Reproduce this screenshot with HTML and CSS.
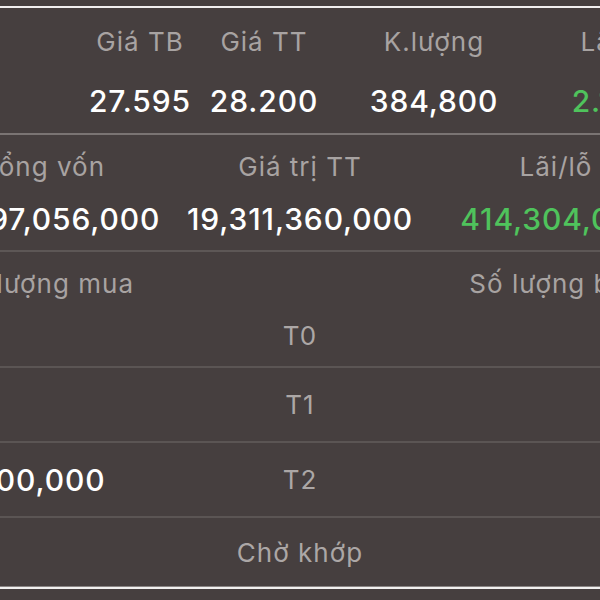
FILE: index.html
```html
<!DOCTYPE html>
<html lang="vi">
<head>
    <meta charset="UTF-8">
    <title>Danh mục - Chi tiết</title>
    <link rel="stylesheet" href="styles.css">
</head>
<body>

<div class="top_rule"></div>

<!-- ===== QUOTE SUMMARY ===== -->
<div class="quote_table">
    <span class="label">Giá TB</span>
    <span class="label">Giá TT</span>
    <span class="label">K.lượng</span>
    <span class="label">Lãi/lỗ</span>

    <span class="value">27.595</span>
    <span class="value">28.200</span>
    <span class="value">384,800</span>
    <span class="value up">2.19%</span>
</div>

<!-- ===== CAPITAL SUMMARY ===== -->
<div class="capital_table">
    <span class="label">Tổng vốn</span>
    <span class="label">Giá trị TT</span>
    <span class="label">Lãi/lỗ</span>

    <span class="value">18,897,056,000</span>
    <span class="value">19,311,360,000</span>
    <span class="value up">414,304,000</span>
</div>

<!-- ===== SETTLEMENT ===== -->
<div class="settle_head">
    <span class="label">Số lượng mua</span>
    <span></span>
    <span class="label">Số lượng bán</span>
</div>
<div class="settle_row first_row">
    <span></span><span class="day">T0</span><span></span>
</div>
<div class="settle_row">
    <span></span><span class="day">T1</span><span></span>
</div>
<div class="settle_row">
    <span class="value">100,000</span><span class="day">T2</span><span></span>
</div>
<div class="settle_row last_row">
    <span></span><span class="day">Chờ khớp</span><span></span>
</div>

<div class="bottom_rule"></div>

</body>
</html>
```

FILE: styles.css
```css
body {
    margin: 0;
    width: 600px;
    height: 600px;
    overflow: hidden;
    background-color: #463f3f;
    font-family: 'Inter', 'Noto Sans', sans-serif;
}

.label {
    font-size: 26px;
    letter-spacing: 1px;
    color: #a8a3a2;
    white-space: nowrap;
}

.value {
    font-size: 30px;
    font-weight: 500;
    letter-spacing: 0.9px;
    color: #fff;
    white-space: nowrap;
}

.up {
    color: #4fc35c;
}

.top_rule {
    margin-top: 6px;
    height: 2px;
    background-color: #f1efef;
}

.bottom_rule {
    height: 2px;
    background-color: #f1efef;
    box-shadow: 0 -1px 0 #8a8584;
}

/* ===== Quote ===== */
.quote_table {
    display: grid;
    grid-template-columns: 124px 124px 216px 150px;
    grid-template-rows: 66px 54px;
    justify-items: center;
    align-items: center;
    padding-left: 78px;
    padding-bottom: 5px;
    width: 692px;
    border-bottom: 2px solid #7a7473;
}

/* ===== Capital ===== */
.capital_table {
    display: grid;
    grid-template-columns: 256px 256px 256px;
    grid-template-rows: 62px 44px;
    justify-items: center;
    align-items: center;
    margin-left: -84px;
    width: 768px;
    padding-bottom: 9px;
    border-bottom: 2px solid #5d5756;
}

/* ===== Settlement ===== */
.settle_head,
.settle_row {
    display: grid;
    grid-template-columns: 256px 256px 256px;
    justify-items: center;
    align-items: center;
    margin-left: -84px;
    width: 768px;
}

.settle_head {
    height: 62px;
}

.settle_row {
    height: 73px;
    border-bottom: 2px solid #5b5554;
}

.first_row {
    height: 42px;
    padding-bottom: 10px;
}

.last_row {
    height: 69px;
    border-bottom: none;
}

.day {
    font-size: 26px;
    letter-spacing: 1px;
    color: #aca7a6;
}
```
